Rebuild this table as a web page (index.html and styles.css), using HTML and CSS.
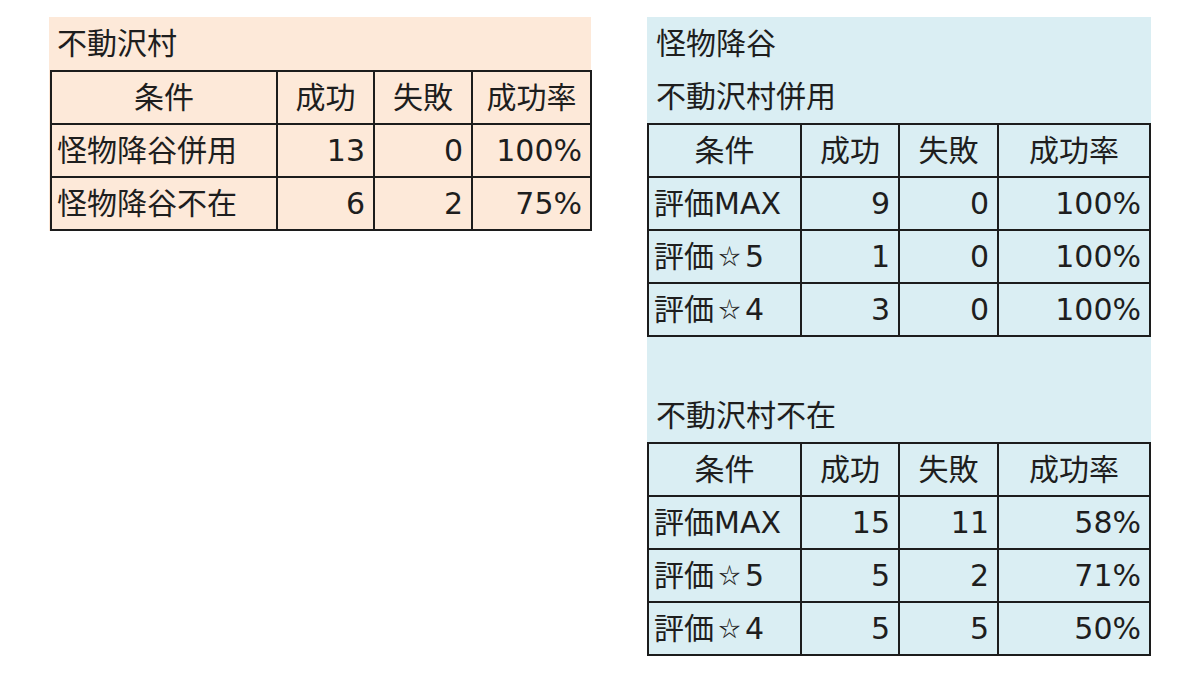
FILE: index.html
```html
<!DOCTYPE html>
<html lang="ja">
<head>
<meta charset="utf-8">
<title>成功率</title>
<link rel="stylesheet" href="styles.css">
</head>
<body>
<div class="page">
  <section class="block peach">
    <div class="title">不動沢村</div>
    <table class="grid left">
      <colgroup><col class="c1"><col class="c2"><col class="c3"><col class="c4"></colgroup>
      <tr><th>条件</th><th>成功</th><th>失敗</th><th>成功率</th></tr>
      <tr><td class="name">怪物降谷併用</td><td>13</td><td>0</td><td>100%</td></tr>
      <tr><td class="name">怪物降谷不在</td><td>6</td><td>2</td><td>75%</td></tr>
    </table>
  </section>
  <section class="block blue">
    <div class="title">怪物降谷</div>
    <div class="title">不動沢村併用</div>
    <table class="grid right">
      <colgroup><col class="c1"><col class="c2"><col class="c3"><col class="c4"></colgroup>
      <tr><th>条件</th><th>成功</th><th>失敗</th><th>成功率</th></tr>
      <tr><td class="name">評価MAX</td><td>9</td><td>0</td><td>100%</td></tr>
      <tr><td class="name">評価<span class="star">☆</span>5</td><td>1</td><td>0</td><td>100%</td></tr>
      <tr><td class="name">評価<span class="star">☆</span>4</td><td>3</td><td>0</td><td>100%</td></tr>
    </table>
    <div class="spacer"></div>
    <div class="title">不動沢村不在</div>
    <table class="grid right">
      <colgroup><col class="c1"><col class="c2"><col class="c3"><col class="c4"></colgroup>
      <tr><th>条件</th><th>成功</th><th>失敗</th><th>成功率</th></tr>
      <tr><td class="name">評価MAX</td><td>15</td><td>11</td><td>58%</td></tr>
      <tr><td class="name">評価<span class="star">☆</span>5</td><td>5</td><td>2</td><td>71%</td></tr>
      <tr><td class="name">評価<span class="star">☆</span>4</td><td>5</td><td>5</td><td>50%</td></tr>
    </table>
  </section>
</div>
</body>
</html>
```

FILE: styles.css
```css
html, body {
  margin: 0;
  padding: 0;
  background: #ffffff;
}
body {
  font-family: "DejaVu Sans", "Noto Sans CJK JP", sans-serif;
  font-size: 30px;
  color: #1e1e1e;
}
.page {
  display: flex;
  align-items: flex-start;
  gap: 56px;
  padding: 17px 0 0 49px;
}
.block {
  display: flex;
  flex-direction: column;
}
.peach {
  width: 542px;
  background: #fde9d9;
}
.blue {
  width: 504px;
  background: #daeef3;
}
.title {
  height: 53px;
  line-height: 53px;
  padding-left: 8px;
  white-space: nowrap;
}
.blue .title {
  padding-left: 9px;
}
.spacer {
  height: 52px;
}
.grid {
  border-collapse: collapse;
  table-layout: fixed;
}
.grid th, .grid td {
  border: 2px solid #1c1c1c;
  height: 51px;
  padding: 0 8px;
  line-height: 51px;
  white-space: nowrap;
  font-weight: normal;
}
.grid th {
  text-align: center;
}
.grid td {
  text-align: right;
}
.grid td.name {
  text-align: left;
  padding-left: 5px;
}
.star {
  display: inline-block;
  font-family: "Noto Sans CJK JP", sans-serif;
  font-size: 22px;
  line-height: 47px;
  width: 31px;
  text-align: center;
  vertical-align: top;
}
.left {
  width: 541px;
  margin-left: 1px;
}
.left .c1 { width: 226px; }
.left .c2 { width: 97px; }
.left .c3 { width: 98px; }
.left .c4 { width: 119px; }
.right {
  width: 503px;
}
.right .c1 { width: 153px; }
.right .c2 { width: 98px; }
.right .c3 { width: 99px; }
.right .c4 { width: 152px; }
```
